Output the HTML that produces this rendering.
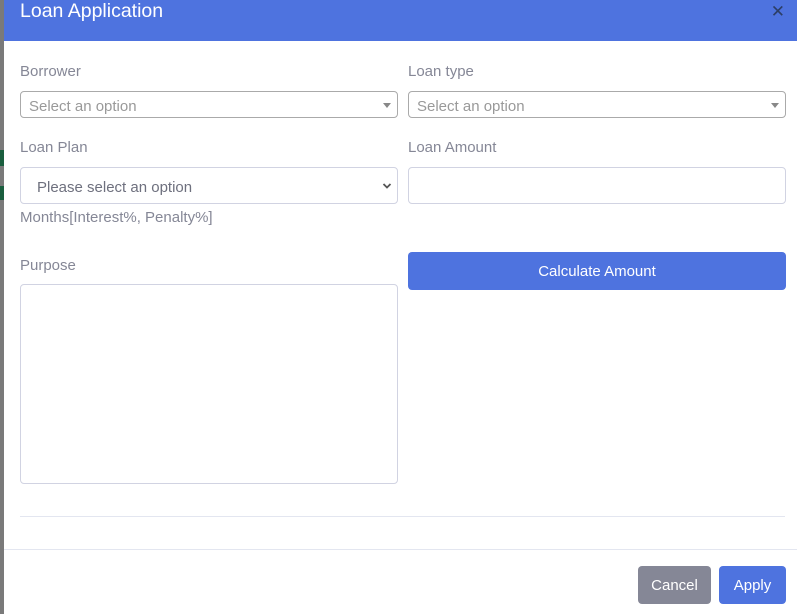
<!DOCTYPE html>
<html><head><meta charset="utf-8"><style>
*{box-sizing:border-box;margin:0;padding:0}
body{width:797px;height:614px;overflow:hidden;background:#fff;font-family:"Liberation Sans",sans-serif;position:relative}
.strip{position:absolute;left:0;top:0;width:4px;height:614px;background:#7a7a7a}
.g{position:absolute;left:0;width:4px;background:#1a5e3e}
.hdr{position:absolute;left:4px;top:0;right:0;height:41px;background:#4e73df}
.hdr h1{position:absolute;left:16px;top:0px;color:#fff;font-size:19.5px;font-weight:normal}
.x{position:absolute;right:12px;top:2px;color:#2c3e66;font-size:17px}
.lbl{position:absolute;color:#858796;font-size:15px}
.box{position:absolute;border:1px solid #d1d3e2;border-radius:4px;background:#fff}
.sel2{border-color:#aaa;border-radius:4px}
.ph{position:absolute;left:8px;top:6px;color:#999;font-size:15px}
.tri{position:absolute;right:6px;top:11px;width:0;height:0;border-left:4px solid transparent;border-right:4px solid transparent;border-top:5px solid #888}
.btn{position:absolute;color:#fff;border-radius:4px;font-size:15px;text-align:center}
.hr{position:absolute;height:1px;background:#e3e6f0}
</style></head><body>
<div class="strip"></div>
<div class="g" style="top:150px;height:16px"></div>
<div class="g" style="top:186px;height:14px"></div>
<div class="hdr"><h1>Loan Application</h1><div class="x">✕</div></div>

<div class="lbl" style="left:20px;top:63px">Borrower</div>
<div class="lbl" style="left:408px;top:63px">Loan type</div>
<div class="box sel2" style="left:20px;top:91px;width:378px;height:27px"><span class="ph">Select an option</span><span class="tri"></span></div>
<div class="box sel2" style="left:408px;top:91px;width:378px;height:27px"><span class="ph">Select an option</span><span class="tri"></span></div>

<div class="lbl" style="left:20px;top:139px">Loan Plan</div>
<div class="lbl" style="left:408px;top:139px">Loan Amount</div>
<div class="box" style="left:20px;top:167px;width:378px;height:37px"><span style="position:absolute;left:16px;top:11px;color:#6e707e;font-size:15px">Please select an option</span>
<svg style="position:absolute;right:5px;top:14px" width="10" height="8" viewBox="0 0 10 8"><path d="M1.5 2 L5 5.5 L8.5 2" stroke="#555" stroke-width="1.8" fill="none"/></svg></div>
<div class="box" style="left:408px;top:167px;width:378px;height:37px"></div>
<div class="lbl" style="left:20px;top:209px">Months[Interest%, Penalty%]</div>

<div class="lbl" style="left:20px;top:257px">Purpose</div>
<div class="btn" style="left:408px;top:252px;width:378px;height:38px;background:#4e73df;line-height:40px">Calculate Amount</div>
<div class="box" style="left:20px;top:284px;width:378px;height:200px"></div>

<div class="hr" style="left:20px;right:12px;top:516px"></div>
<div class="hr" style="left:4px;right:0;top:549px"></div>
<div class="btn" style="left:638px;top:566px;width:73px;height:38px;line-height:40px;background:#858796">Cancel</div>
<div class="btn" style="left:719px;top:566px;width:67px;height:38px;line-height:40px;background:#4e73df">Apply</div>
</body></html>
